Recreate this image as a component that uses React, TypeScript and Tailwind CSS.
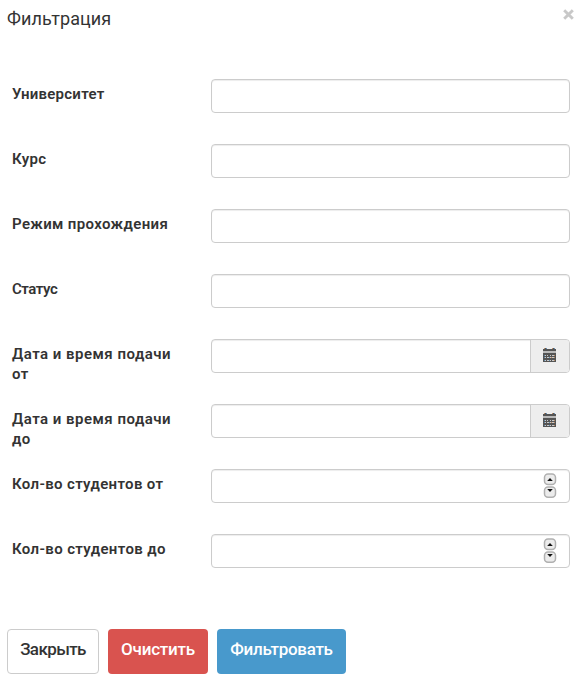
import React from 'react';

type Kind = 'text' | 'date' | 'number';

const fields: { label: React.ReactNode; kind: Kind; tracking: string }[] = [
  { label: 'Университет', kind: 'text', tracking: 'tracking-[0.24px]' },
  { label: 'Курс', kind: 'text', tracking: 'tracking-[0.35px]' },
  { label: 'Режим прохождения', kind: 'text', tracking: 'tracking-[0.35px]' },
  { label: 'Статус', kind: 'text', tracking: 'tracking-[-0.45px]' },
  { label: <>Дата и время подачи<br />от</>, kind: 'date', tracking: 'tracking-[0.49px]' },
  { label: <>Дата и время подачи<br />до</>, kind: 'date', tracking: 'tracking-[0.49px]' },
  { label: 'Кол-во студентов от', kind: 'number', tracking: 'tracking-[0.34px]' },
  { label: 'Кол-во студентов до', kind: 'number', tracking: 'tracking-[0.36px]' },
];

function CalendarIcon() {
  return (
    <svg width="13" height="14" viewBox="0 0 13 14" shapeRendering="crispEdges">
      <path d="M1 0h3v1h5V0h3v1h1v3H0V1h1z" fill="#555" />
      <path d="M1 0h1v1H1zM9 0h1v1H9z" fill="#b98b66" />
      <path d="M3 0h1v1H3zM11 0h1v1h-1z" fill="#668fb5" />
      <path d="M0 3h13v2H0z" fill="#bbb" />
      <path d="M0 5h13v9H0z" fill="#555" />
      <path d="M2 7h1v1H2zM4 7h1v1H4zM7 7h1v1H7zM9 7h2v1H9zM2 9h1v1H2zM4 9h2v1H4zM7 9h1v1H7zM9 9h2v1H9zM2 12h1v1H2zM4 12h2v1H4zM7 12h1v1H7zM9 12h2v1H9z" fill="#c9c9c9" />
      <path d="M1 7h1v1H1zM1 9h1v1H1zM6 9h1v1H6zM1 12h1v1H1zM6 12h1v1H6z" fill="#5d88ab" />
      <path d="M11 7h1v1h-1zM11 9h1v1h-1zM8 9h1v1H8zM11 12h1v1h-1z" fill="#b98b66" />
    </svg>
  );
}

function Spinner() {
  return (
    <svg width="14" height="25" viewBox="0 0 14 25">
      <rect x="1.5" y="1" width="11" height="10.5" rx="3.5" fill="#ececec" stroke="#b0b0b0" strokeWidth="1.5" />
      <rect x="1.5" y="14" width="11" height="10.2" rx="3.5" fill="#ececec" stroke="#b0b0b0" strokeWidth="1.5" />
      <path d="M7 5 9.8 8H4.2zM7 19 4.2 16h5.6z" fill="#111" />
    </svg>
  );
}

export default function App() {
  return (
    <main className="flex h-[684px] w-[580px] flex-col bg-white font-['Roboto','Noto_Sans',sans-serif] text-[#333]">
      <header className="flex h-[79px] items-start justify-between pl-[7px] pr-[6px] pt-[7px]">
        <h1 className="text-[18px] leading-6 tracking-[0.1px]">Фильтрация</h1>
        <button aria-label="Закрыть окно" className="mt-[2px] text-[#c8c8c8]">
          <svg width="11" height="11" viewBox="0 0 11 11">
            <path d="M1.2 1.2l8.6 8.6M9.8 1.2 1.2 9.8" stroke="currentColor" strokeWidth="2.9" />
          </svg>
        </button>
      </header>
      <form className="flex flex-col pl-3 pr-[10px]">
        {fields.map((f, i) => (
          <div key={i} className="flex h-[65px] items-start">
            <label className={`w-[199px] shrink-0 whitespace-nowrap pt-[5px] text-[15px] font-semibold leading-5 ${f.tracking}`}>
              {f.label}
            </label>
            <div className="flex h-[34px] flex-1 overflow-hidden rounded-[4px] border border-[#ccc] shadow-[inset_0_1px_1px_rgba(0,0,0,0.075)]">
              <input className="min-w-0 flex-1 bg-transparent px-3 outline-none" />
              {f.kind === 'date' && (
                <span className="flex w-[39px] items-start border-l border-[#ccc] bg-[#eee] pl-3 pt-[8px]">
                  <CalendarIcon />
                </span>
              )}
              {f.kind === 'number' && <span className="mr-[12px] mt-[3px]"><Spinner /></span>}
            </div>
          </div>
        ))}
      </form>
      <footer className="mt-[30px] flex gap-[9px] pl-[7px] text-[17px] font-medium">
        <button className="h-[45px] w-[92px] whitespace-nowrap rounded-[4px] border border-[#ccc] pb-1 tracking-[-0.6px]">Закрыть</button>
        <button className="h-[45px] w-[100px] whitespace-nowrap rounded-[4px] bg-[#d9534f] pb-1 tracking-[-0.2px] text-white">Очистить</button>
        <button className="h-[45px] w-[129px] whitespace-nowrap rounded-[4px] bg-[#4899cc] pb-1 tracking-[-0.3px] text-white">Фильтровать</button>
      </footer>
    </main>
  );
}
